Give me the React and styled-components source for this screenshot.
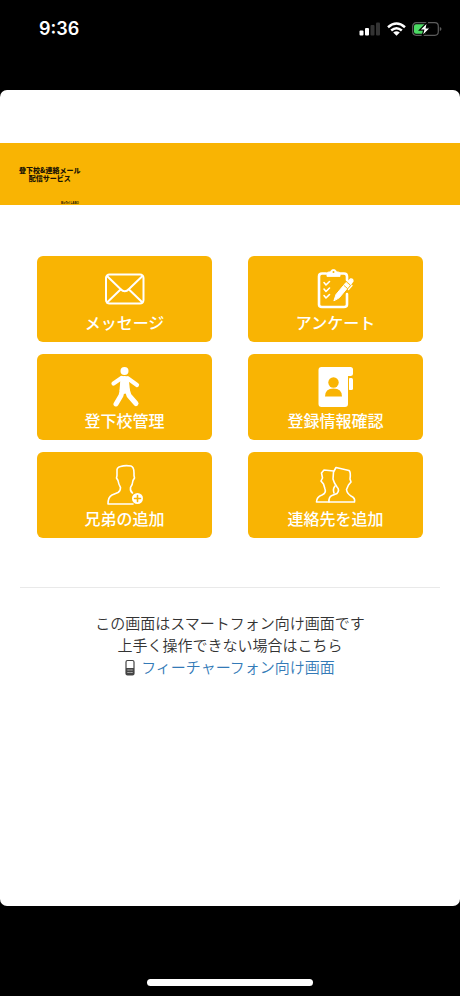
import React from 'react';
import styled, { createGlobalStyle } from 'styled-components';

/*
Orange -
#F9B403
Link -
#337AB7
*/

const GlobalStyle = createGlobalStyle`
    * {
        box-sizing: border-box;
    }

    body {
        margin: 0;
        background: #000;
        font-family: 'Noto Sans CJK JP', sans-serif;
    }
`;

const Screen = styled.div`
    min-height: 100vh;
    display: flex;
    flex-direction: column;
    background: #000;
`;

const StatusBar = styled.header`
    height: 90px;
    padding: 16px 18px 0 39px;
    display: flex;
    justify-content: space-between;
    align-items: flex-start;
    color: #fff;
`;

const Time = styled.time`
    font-family: Inter, sans-serif;
    font-size: 18px;
    font-weight: 600;
    line-height: 26px;
`;

const StatusIcons = styled.div`
    height: 26px;
    display: flex;
    align-items: center;
    gap: 6px;

    svg {
        display: block;
    }
`;

const Sheet = styled.main`
    flex: 1;
    padding-top: 53px;
    background: #fff;
    border-radius: 7px;
`;

const Banner = styled.div`
    height: 62px;
    padding: 23px 19px 0;
    display: flex;
    flex-direction: column;
    align-items: flex-start;
    justify-content: space-between;
    background: #f9b403;
`;

const Logo = styled.h1`
    margin: 0;
    display: flex;
    flex-direction: column;
    align-items: center;
    color: #1c1503;
    font-size: 7px;
    font-weight: 900;
    line-height: 8px;
`;

const Company = styled.small`
    margin-left: 42px;
    color: #1c1503;
    font-family: 'Liberation Sans', sans-serif;
    font-size: 3px;
    font-weight: 700;
    line-height: 4px;
`;

const Menu = styled.nav`
    padding: 51px 37px 49px;
    display: grid;
    grid-template-columns: 1fr 1fr;
    gap: 12px 36px;
`;

const MenuButton = styled.button`
    height: 86px;
    padding: 12px 0 0;
    display: flex;
    flex-direction: column;
    align-items: center;
    border: 0;
    border-radius: 6px;
    background: #f9b403;
    color: #fff;
    font-family: inherit;
    font-size: 16px;
    font-weight: 500;
    line-height: 24px;
    cursor: pointer;
`;

const Icon = styled.svg`
    width: 42px;
    height: 42px;
    fill: none;
    stroke: #fff;
    stroke-width: ${props => props.$thin ? 1.6 : 2};
    stroke-linecap: round;
    stroke-linejoin: round;
    flex: none;
`;

const Notice = styled.footer`
    margin: 0 20px;
    padding-top: 24px;
    border-top: 1px solid #e9e9e9;
    color: #333;
    font-size: 15px;
    font-weight: 350;
    line-height: 22px;
    text-align: center;

    p {
        margin: 0;
    }
`;

const PhoneLink = styled.a`
    display: inline-flex;
    align-items: center;
    gap: 6px;
    color: #337ab7;
    text-decoration: none;
`;

const MailIcon = () => (
    <Icon viewBox="0 0 42 42">
        <rect x="2" y="6.500" width="37.500" height="29" rx="3.500" />
        <path d="M3 8 L16.500 21 Q20.750 25.500 25 21 L38.500 8 M3 34.500 L16 22 M38.500 34.500 L25.500 22" />
    </Icon>
);

const SurveyIcon = () => (
    <Icon viewBox="0 0 42 42">
        <path d="M11 5.500 H7 Q4 5.500 4 8.500 V36.500 Q4 39 7 39 H29 Q32 39 32 36.500 V26 M25 5.500 H29 Q32 5.500 32 8.500 V12" strokeWidth="2.6" />
        <path d="M12 8 V5.500 Q12 4 14 4 H15.500 Q16 1.500 18.500 1.500 Q21 1.500 21.500 4 H23 Q25 4 25 5.500 V8 Z" fill="#fff" strokeWidth="1" />
        <circle cx="18.500" cy="4" r="1" fill="#f9b403" stroke="none" />
        <path d="M9 14.500 L11 17 L14.500 13.500 M9 21 L11 23.500 L14.500 20 M9 27.500 L11 30 L14.500 26.500" strokeWidth="1.6" />
        <path d="M19 32.500 L21 26.500 L31 14.500 L34.500 17.500 L24.500 29.500 Z" fill="#fff" strokeWidth="1" />
        <path d="M32.500 14 L35.500 11 Q38 10.500 38 13 L35.500 16.500 Z M37 17.500 L33.500 21.500" fill="#fff" strokeWidth="1.3" />
        <path d="M29 17.500 L32.500 20.500 M32.500 14.500 L35 16.800" stroke="#f9b403" strokeWidth="0.900" />
    </Icon>
);

const WalkIcon = () => (
    <Icon viewBox="0 0 42 42">
        <circle cx="20.500" cy="5" r="4" fill="#fff" stroke="none" />
        <path d="M16.500 10.500 Q20.500 9.300 24.500 10.500 L26 25 L20.800 28 L15.500 25 Z" fill="#fff" stroke="none" />
        <path d="M17.500 12 L9.500 17.500 M24 12.500 L33 19" strokeWidth="4.200" />
        <path d="M18.300 24 L17 29.500 L12 38 M23.300 24 L25 29.500 L32 37.500" strokeWidth="5" />
    </Icon>
);

const AddressIcon = () => (
    <Icon viewBox="0 0 42 42">
        <path d="M6.500 1 H35.500 Q38 1 38 3.500 V8 Q38 10 35.500 10 H33 V38 Q33 41 30 41 H6.500 Q3.500 41 3.500 38 V4 Q3.500 1 6.500 1 Z" fill="#fff" stroke="none" />
        <rect x="33.500" y="12" width="4.500" height="12" rx="1.500" fill="#fff" stroke="none" />
        <path d="M33.500 11 V24" stroke="#f9b403" strokeWidth="1" />
        <circle cx="18.500" cy="16.500" r="5.200" fill="#f9b403" stroke="none" />
        <path d="M10 30.500 Q10 22.500 18.500 22.500 Q27 22.500 27 30.500 Z" fill="#f9b403" stroke="none" />
    </Icon>
);

const AddChildIcon = () => (
    <Icon viewBox="0 0 42 42" $thin>
        <path d="M29 40 H4 Q4 33 8 31 L14 28.500 Q16.500 27 16.500 23.500 Q14.500 20 14 16.500 L12.500 14 L13 11.500 V7 Q12.500 3.500 16.500 2.500 Q21 1 27 2 Q30 3 30 9 V11.500 L30.500 14 L29 16.500 Q28.500 21 26.500 23.500 Q26 27.500 28.500 29" />
        <circle cx="33.500" cy="34.500" r="5.500" fill="#fff" stroke="none" />
        <path d="M33.500 31.500 V37.500 M30.500 34.500 H36.500" stroke="#f9b403" />
    </Icon>
);

const ContactsIcon = () => (
    <Icon viewBox="0 0 42 42" $thin>
        <path d="M14 38 Q13.500 33 17 31.500 L22 29.500 Q25 26 22 23 L19.500 19 L18 15 L18.500 8 L21 3.500 L34 6.500 Q36 8 35 15 L36 18 L33.500 21 L31.500 25.500 Q32 29.500 36 32 Q40.500 34 39.500 38 Z" />
        <path d="M18.500 7 L9 6 L6.500 9 L7.500 14 L6 17 L8.500 20 L10 25 Q11.500 29 7 31 Q1.500 33 1.500 38 H14 M20 22 Q17.500 25 19 29" />
    </Icon>
);

const menu = [
    { label: 'メッセージ', icon: MailIcon },
    { label: 'アンケート', icon: SurveyIcon },
    { label: '登下校管理', icon: WalkIcon },
    { label: '登録情報確認', icon: AddressIcon },
    { label: '兄弟の追加', icon: AddChildIcon },
    { label: '連絡先を追加', icon: ContactsIcon },
];

const SignalIcon = () => (
    <svg width="22" height="14" viewBox="0 0 22 14" fill="#fff">
        <rect x="0.500" y="8.500" width="4" height="5" rx="1" />
        <rect x="6" y="6" width="4" height="7.500" rx="1" />
        <rect x="11.500" y="3" width="4" height="10.500" rx="1" fill="#333" />
        <rect x="17" y="0.500" width="4" height="13" rx="1" fill="#333" />
    </svg>
);

const WifiIcon = () => (
    <svg width="19" height="14" viewBox="0 0 19 14" fill="none" stroke="#fff" strokeWidth="2.500">
        <path d="M1 5.200 Q9.500 -2.200 18 5.200 M4.200 8.500 Q9.500 3.900 14.800 8.500" />
        <path d="M9.500 13.800 L6.200 10.500 Q9.500 8 12.800 10.500 Z" fill="#fff" stroke="none" />
    </svg>
);

const BatteryIcon = () => (
    <svg width="30" height="16" viewBox="0 0 30 16">
        <rect x="0.700" y="1.700" width="25.600" height="12.600" rx="3.500" fill="none" stroke="#5c5c5c" strokeWidth="1.200" />
        <path d="M27.800 6 Q29.500 6.500 29.500 8 Q29.500 9.500 27.800 10 Z" fill="#5c5c5c" />
        <path d="M4 3.200 H14 V12.800 H4 Q2 12.800 2 10.800 V5.200 Q2 3.200 4 3.200 Z" fill="#4cd964" />
        <path d="M15.500 1 L7.500 9.200 H11.700 L10 15.500 L18.500 6.800 H14.300 Z" fill="#fff" stroke="#000" strokeWidth="1.200" />
    </svg>
);

const MobileIcon = () => (
    <svg width="10" height="18" viewBox="0 0 10 18">
        <rect x="1" y="2.500" width="8" height="14.500" rx="1.500" fill="#fff" stroke="#444" strokeWidth="1.200" />
        <path d="M1 10 H9 V17 H1 Z" fill="#444" />
        <path d="M2.500 12 H7.500 M2.500 14.500 H7.500" stroke="#fff" strokeWidth="0.800" strokeDasharray="1.200 0.700" />
    </svg>
);

const HomeArea = styled.div`
    height: 90px;
    display: flex;
    justify-content: center;
    align-items: flex-end;
    padding-bottom: 10px;
`;

const HomeIndicator = styled.div`
    width: 36%;
    height: 7px;
    border-radius: 4px;
    background: #fff;
`;

const App = () => (
    <Screen>
        <GlobalStyle />
        <StatusBar>
            <Time>9:36</Time>
            <StatusIcons>
                <SignalIcon />
                <WifiIcon />
                <BatteryIcon />
            </StatusIcons>
        </StatusBar>

        <Sheet>
            <Banner>
                <Logo>
                    <span>登下校&amp;連絡メール</span>
                    <span>配信サービス</span>
                </Logo>
                <Company>BizTel LABO</Company>
            </Banner>

            <Menu>
                {menu.map(({ label, icon: ItemIcon }) => (
                    <MenuButton key={label} type="button">
                        <ItemIcon />
                        {label}
                    </MenuButton>
                ))}
            </Menu>

            <Notice>
                <p>この画面はスマートフォン向け画面です</p>
                <p>上手く操作できない場合はこちら</p>
                <PhoneLink href="#feature-phone">
                    <MobileIcon />
                    フィーチャーフォン向け画面
                </PhoneLink>
            </Notice>
        </Sheet>

        <HomeArea>
            <HomeIndicator />
        </HomeArea>
    </Screen>
);
export default App;
